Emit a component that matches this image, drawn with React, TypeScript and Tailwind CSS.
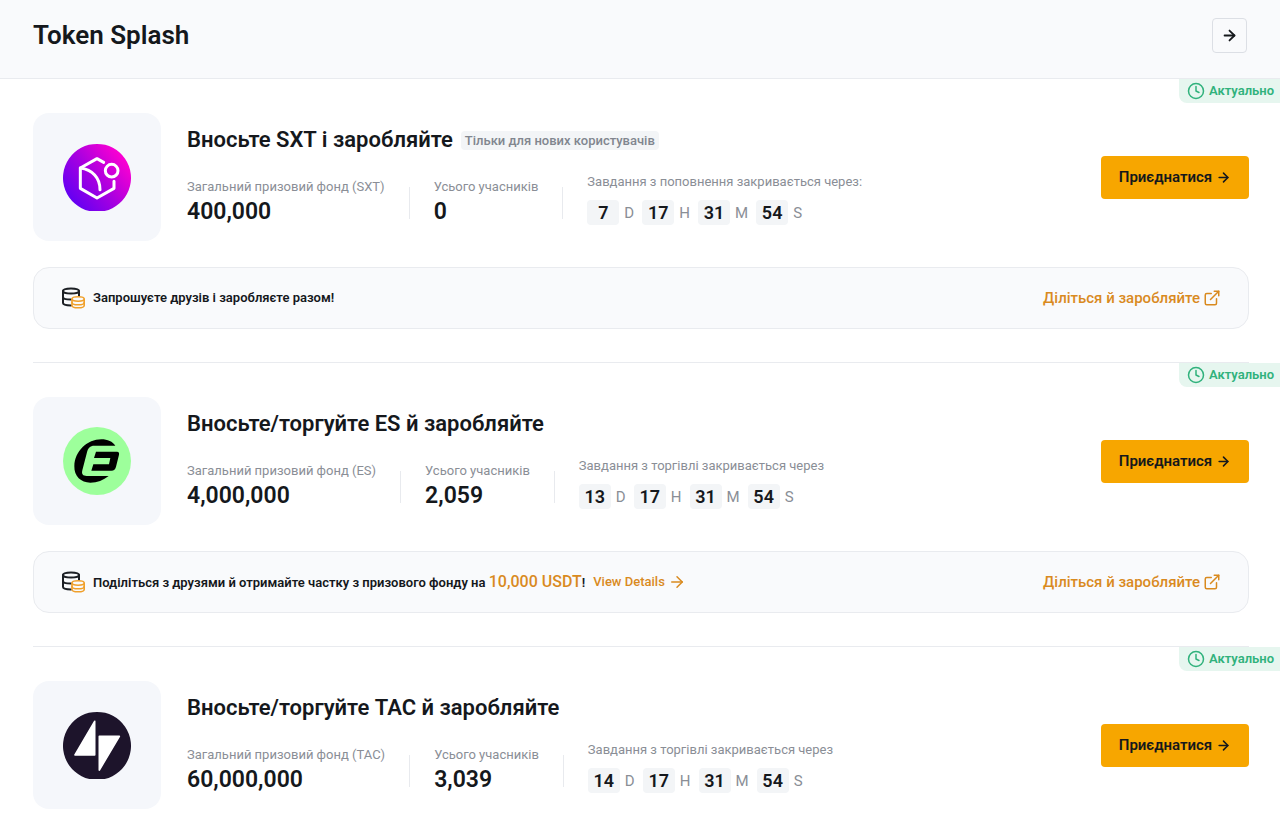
import React from "react";
import { ArrowRight, Clock, ExternalLink } from "lucide-react";

type Campaign = {
  id: string;
  title: string;
  tag?: string;
  token: string;
  pool: string;
  participants: string;
  deadlineLabel: string;
  days: number;
  promo?: { text: string; reward?: string };
};

const campaigns: Campaign[] = [
  {
    id: "sxt",
    title: "Вносьте SXT і заробляйте",
    tag: "Тільки для нових користувачів",
    token: "SXT",
    pool: "400,000",
    participants: "0",
    deadlineLabel: "Завдання з поповнення закривається через:",
    days: 7,
    promo: { text: "Запрошуєте друзів і заробляєте разом!" },
  },
  {
    id: "es",
    title: "Вносьте/торгуйте ES й заробляйте",
    token: "ES",
    pool: "4,000,000",
    participants: "2,059",
    deadlineLabel: "Завдання з торгівлі закривається через",
    days: 13,
    promo: {
      text: "Поділіться з друзями й отримайте частку з призового фонду на",
      reward: "10,000 USDT",
    },
  },
  {
    id: "tac",
    title: "Вносьте/торгуйте TAC й заробляйте",
    token: "TAC",
    pool: "60,000,000",
    participants: "3,039",
    deadlineLabel: "Завдання з торгівлі закривається через",
    days: 14,
  },
];

function SxtLogo() {
  return (
    <svg viewBox="21 18 204 204" className="h-[68px] w-[68px]" fill="none" aria-hidden="true">
      <defs>
        <linearGradient id="sxt" x1="45" y1="190" x2="200" y2="65" gradientUnits="userSpaceOnUse">
          <stop offset="0" stopColor="#6400f2" />
          <stop offset="0.5" stopColor="#a800e0" />
          <stop offset="1" stopColor="#f800d2" />
        </linearGradient>
      </defs>
      <path d="M100 222a102 102 0 1 1 46 0z" fill="url(#sxt)" />
      <g stroke="#fff" strokeWidth="9" strokeLinecap="round" strokeLinejoin="round">
        <path d="M143 76 123 65 73 93v61l50 29 51-29v-21" />
        <path d="M73 93c36 5 59 29 59 65" />
        <circle cx="167" cy="101" r="19" />
      </g>
    </svg>
  );
}

function EsLogo() {
  return (
    <svg viewBox="23 23 204 204" className="h-[68px] w-[68px]" aria-hidden="true">
      <circle cx="125" cy="125" r="102" fill="#9dff9b" />
      <path d="M180 79c-8-12-23-19-42-19-42 0-80 36-81 80-1 31 20 50 48 50 21 0 39-7 55-20H94c-11 0-16-5-13-17l14-54c3-13 9-20 22-20z" />
      <path d="M122 97h63c6 0 7 4 6 9l-9 36c-2 8-6 12-14 12h-60l6-19h47l4-19h-49z" />
    </svg>
  );
}

function TacLogo() {
  return (
    <svg viewBox="21 18 204 204" className="h-[68px] w-[68px]" aria-hidden="true">
      <path d="M100 222a102 102 0 1 1 46 0z" fill="#1d142b" />
      <g fill="#fff" stroke="#fff" strokeWidth="5" strokeLinejoin="round">
        <path d="M116 49v101H57z" />
        <path d="M130 94h60l-60 101z" />
      </g>
    </svg>
  );
}

function CoinsIcon() {
  return (
    <svg viewBox="0 0 24 22" className="h-[22px] w-6 shrink-0" fill="none" aria-hidden="true">
      <g stroke="#1c1f24" strokeWidth="2" strokeLinecap="round">
        <ellipse cx="10" cy="4" rx="8" ry="2.6" />
        <path d="M2 4v12c0 1.400 3 2.400 8 2.400M18 4v5" />
        <path d="M2 10c0 1.600 3.500 2.600 8 2.600" />
      </g>
      <g stroke="#f0a02c" strokeWidth="1.600" strokeLinecap="round">
        <path d="M11 12.200v6.200c0 1.300 2.700 2.300 6.100 2.300s6.100-1 6.100-2.300v-6.200" fill="#f9fafc" />
        <ellipse cx="17.100" cy="12" rx="6.100" ry="2.200" fill="#f9fafc" />
        <path d="M11 15.400c0 1.300 2.700 2.300 6.100 2.300s6.100-1 6.100-2.300" />
      </g>
    </svg>
  );
}

function TokenLogo({ id }: { id: string }) {
  return (
    <div className="flex h-32 w-32 shrink-0 items-center justify-center rounded-2xl bg-[#f5f7fb]">
      {id === "sxt" && <SxtLogo />}
      {id === "es" && <EsLogo />}
      {id === "tac" && <TacLogo />}
    </div>
  );
}

function Stat({ label, value }: { label: string; value: string }) {
  return (
    <div>
      <p className="text-[13px] leading-5 text-[#8a8e96]">{label}</p>
      <p className="text-[23px] leading-[30px] font-semibold">{value}</p>
    </div>
  );
}

function Divider() {
  return <div className="mx-6 mb-2 h-8 w-px bg-[#e8eaee]" />;
}

function Countdown({ days }: { days: number }) {
  const parts = [
    { value: days, unit: "D" },
    { value: 17, unit: "H" },
    { value: 31, unit: "M" },
    { value: 54, unit: "S" },
  ];
  return (
    <div className="flex gap-2">
      {parts.map((part) => (
        <div key={part.unit} className="flex items-center gap-[5px]">
          <span className="flex h-[25px] w-8 items-center justify-center rounded-sm bg-[#f3f5f7] text-lg leading-6 font-semibold">
            {part.value}
          </span>
          <span className="min-w-[10px] text-[15px] leading-6 text-[#8a8e96]">{part.unit}</span>
        </div>
      ))}
    </div>
  );
}

function PromoBanner({ promo }: { promo: NonNullable<Campaign["promo"]> }) {
  return (
    <div className="mt-[26px] flex h-[62px] items-center justify-between rounded-2xl border border-[#e9ebef] bg-[#f9fafc] px-[27px]">
      <div className="flex items-center">
        <CoinsIcon />
        <p className="ml-2 text-[13px] leading-5 font-semibold">
          {promo.text}
          {promo.reward && (
            <>
              {" "}
              <span className="text-base leading-5 font-medium text-[#d98a1f]">{promo.reward}</span>!
            </>
          )}
        </p>
        {promo.reward && (
          <a href="#details" className="ml-2 flex items-center gap-[3px] text-[13px] leading-5 font-medium text-[#d98a1f]">
            View Details
            <ArrowRight size={18} />
          </a>
        )}
      </div>
      <a href="#share" className="flex items-center gap-[3px] text-[15px] leading-5 font-medium text-[#d98a1f]">
        Діліться й заробляйте
        <ExternalLink size={18} />
      </a>
    </div>
  );
}

function CampaignCard({ campaign }: { campaign: Campaign }) {
  return (
    <section className="group relative pr-[31px] pl-[33px]">
      <div className="border-b border-[#e9ebef] pt-[34px] pb-[33px] group-last:border-b-0 group-last:pb-3">
        <div className="flex items-center">
          <TokenLogo id={campaign.id} />
          <div className="ml-[26px] flex-1 self-start pt-3">
            <div className="flex items-center gap-2">
              <h2 className="text-[22px] leading-[30px] font-semibold">{campaign.title}</h2>
              {campaign.tag && (
                <span className="rounded-sm bg-[#f3f5f7] px-1 text-[13px] leading-[19px] font-medium text-[#81868f]">
                  {campaign.tag}
                </span>
              )}
            </div>
            <div className="mt-[17px] flex items-end">
              <Stat label={`Загальний призовий фонд (${campaign.token})`} value={campaign.pool} />
              <Divider />
              <Stat label="Усього учасників" value={campaign.participants} />
              <Divider />
              <div className="pb-[2px]">
                <p className="mb-2 text-[13px] leading-5 text-[#8a8e96]">{campaign.deadlineLabel}</p>
                <Countdown days={campaign.days} />
              </div>
            </div>
          </div>
          <button
            type="button"
            className="flex h-[43px] w-[148px] items-center justify-center gap-1 rounded bg-[#f7a600] text-[15px] leading-5 font-semibold"
          >
            Приєднатися
            <ArrowRight size={15} strokeWidth={2.5} />
          </button>
        </div>
        {campaign.promo && <PromoBanner promo={campaign.promo} />}
      </div>
      <div className="absolute top-0 right-0 flex h-6 items-center gap-1 rounded-bl-lg bg-[#e6f6ef] pr-[6px] pl-2 text-[13px] font-semibold text-[#30b27c]">
        <Clock size={18} />
        Актуально
      </div>
    </section>
  );
}

export default function App() {
  return (
    <div className="min-h-screen bg-white font-['Roboto',sans-serif] text-[#15181c]">
      <header className="flex items-center justify-between border-b border-[#e9ebef] bg-[#f9fafc] pt-[18px] pr-[33px] pb-[25px] pl-[33px]">
        <h1 className="text-[26px] leading-[35px] font-semibold">Token Splash</h1>
        <button
          type="button"
          aria-label="Next"
          className="flex h-[35px] w-[35px] items-center justify-center rounded border border-[#dcdfe5]"
        >
          <ArrowRight size={17} strokeWidth={2.5} />
        </button>
      </header>
      <main>
        {campaigns.map((campaign) => (
          <CampaignCard key={campaign.id} campaign={campaign} />
        ))}
      </main>
    </div>
  );
}
